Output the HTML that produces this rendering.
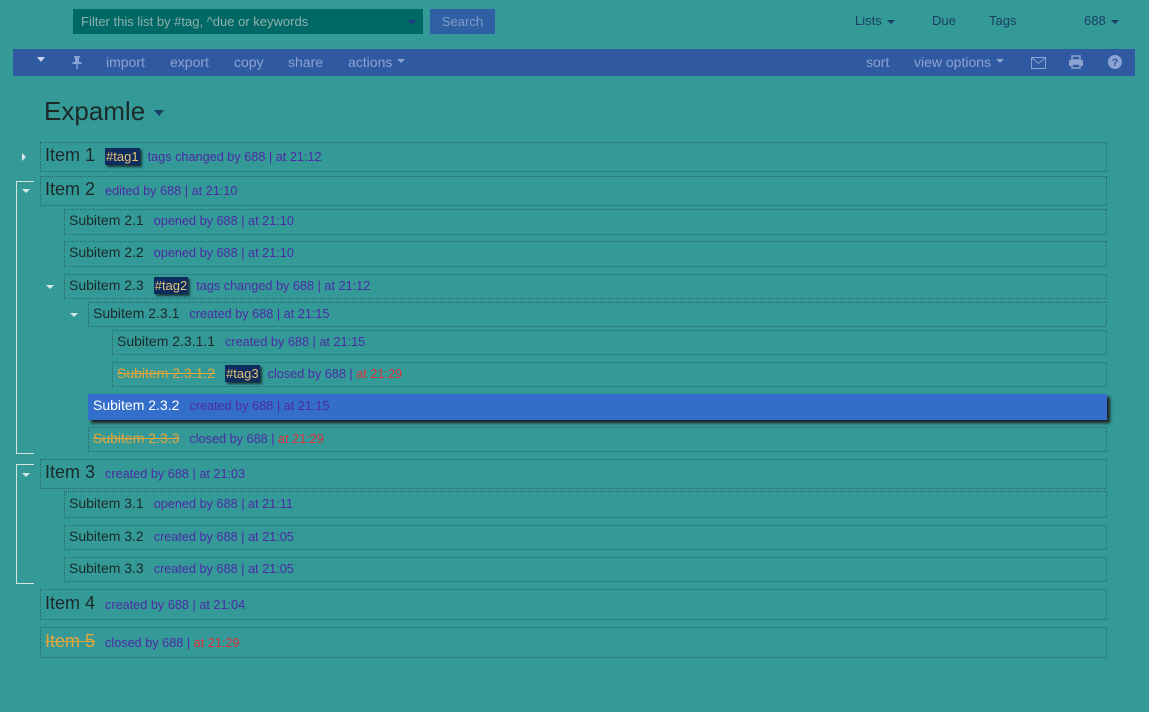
<!DOCTYPE html>
<html><head><meta charset="utf-8"><style>
*{box-sizing:border-box;margin:0;padding:0}
body{width:1149px;height:712px;background:#339a97;font-family:"Liberation Sans",sans-serif;position:relative;overflow:hidden}
.a{position:absolute}
.search{left:73px;top:9px;width:350px;height:25px;background:#006865;color:#8fb0ad;font-size:13px;line-height:25px;padding-left:8px}
.btn{left:430px;top:9px;width:65px;height:25px;background:#3060a4;color:#7f9cc8;font-size:13px;line-height:25px;text-align:center}
.nav{top:13px;color:#1a3e66;font-size:13px}
.bar{left:13px;top:49px;width:1122px;height:27px;background:#2f5aa1}
.bar span{position:absolute;top:5px;color:#8ba3d2;font-size:14px}
.car{display:inline-block;width:0;height:0;border-left:4px solid transparent;border-right:4px solid transparent;border-top:4px solid currentColor;vertical-align:middle;margin-left:5px}
h1{position:absolute;left:44px;top:96px;font-size:26px;font-weight:normal;color:#1c2a2a}
.r{position:absolute;border:1px dotted #2a6664;height:28px;white-space:nowrap;padding-left:4px;font-size:13px}
.r .t{color:#1c2a2a}
.big .t{font-size:18px}
.sub .t{font-size:14px}
.m{color:#4e2aa6;margin-left:10px;font-size:12.7px}
.tag+.m{margin-left:8px}
.red{color:#e0303a}
.done{color:#e6a53a !important;text-decoration:line-through}
.tag{background:#0e2c5e;color:#e5c277;padding:1px 1px;box-shadow:2px 2px 2px #1a3a3a;margin-left:10px;font-size:13px}
.tri{position:absolute;width:0;height:0;border-left:4px solid transparent;border-right:4px solid transparent;border-top:4px solid #d8e8e8}
.trr{position:absolute;width:0;height:0;border-top:4px solid transparent;border-bottom:4px solid transparent;border-left:4px solid #d8e8e8}
.br{position:absolute;border:1px solid #d5e3e3;border-right:none;width:18px}
.sel{background:#336ecb;border:none;box-shadow:3px 3px 3px #1e1e1e}
</style></head><body>
<div class="a search">Filter this list by #tag, ^due or keywords<span class="a" style="right:6px;top:11px;border-left:5px solid transparent;border-right:5px solid transparent;border-top:5px solid #1a4580"></span></div>
<div class="a btn">Search</div>
<div class="a nav" style="left:855px">Lists<span class="car"></span></div>
<div class="a nav" style="left:932px">Due</div>
<div class="a nav" style="left:989px">Tags</div>
<div class="a nav" style="left:1084px">688<span class="car"></span></div>
<div class="a bar">
<span style="left:19px;top:3px"><span class="car" style="border-top-color:#c9d5ee;border-width:5px 4px 0"></span></span>
<span style="left:59px;top:7px"><svg width="10" height="13"><rect x="2" y="0" width="6" height="1.5" fill="#8ba3d2"/><rect x="3" y="1" width="4" height="5" fill="#8ba3d2"/><rect x="0.5" y="6" width="9" height="2" fill="#8ba3d2"/><rect x="4.3" y="8" width="1.4" height="5" fill="#8ba3d2"/></svg></span>
<span style="left:93px">import</span><span style="left:157px">export</span><span style="left:221px">copy</span><span style="left:275px">share</span><span style="left:335px">actions<span class="car"></span></span>
<span style="left:853px">sort</span><span style="left:901px">view options<span class="car"></span></span>
<span style="left:1018px;top:7px"><svg width="15" height="12"><rect x=".5" y=".5" width="14" height="11" fill="none" stroke="#8ba3d2"/><path d="M.5 .5L7.5 6.5L14.5 .5" fill="none" stroke="#8ba3d2"/></svg></span>
<span style="left:1056px;top:6px"><svg width="14" height="14"><rect x="3" y="1" width="8" height="4" fill="none" stroke="#8ba3d2" stroke-width="1.5"/><rect x="0" y="5" width="14" height="6" rx="1" fill="#8ba3d2"/><rect x="3" y="9" width="8" height="4" fill="#2f5aa1" stroke="#8ba3d2" stroke-width="1.5"/></svg></span>
<span style="left:1095px;top:6px"><svg width="14" height="14"><circle cx="7" cy="7" r="7" fill="#8ba3d2"/><text x="7" y="11" font-size="11" font-weight="bold" text-anchor="middle" fill="#2f5aa1" font-family="Liberation Sans">?</text></svg></span>
</div>
<h1>Expamle<span class="car" style="border-width:6px 5px 0;border-top-color:#1a3e66;margin-left:9px"></span></h1>

<div class="trr" style="left:22px;top:153px"></div>
<div class="tri" style="left:22px;top:189px"></div>
<div class="tri" style="left:46px;top:285px"></div>
<div class="tri" style="left:70px;top:313px"></div>
<div class="tri" style="left:22px;top:473px"></div>
<div class="br" style="left:16px;top:181px;height:273px"></div>
<div class="br" style="left:16px;top:464px;height:120px"></div>

<div class="r big" style="left:40px;top:142px;width:1067px;height:30px;line-height:25px"><span class="t">Item 1</span><span class="tag">#tag1</span><span class="m">tags changed by 688 | at 21:12</span></div>
<div class="r big" style="left:40px;top:176px;width:1067px;height:30px;line-height:25px"><span class="t">Item 2</span><span class="m">edited by 688 | at 21:10</span></div>
<div class="r sub" style="left:64px;top:209px;width:1043px;height:26px;line-height:21px"><span class="t">Subitem 2.1</span><span class="m">opened by 688 | at 21:10</span></div>
<div class="r sub" style="left:64px;top:241px;width:1043px;height:26px;line-height:21px"><span class="t">Subitem 2.2</span><span class="m">opened by 688 | at 21:10</span></div>
<div class="r sub" style="left:64px;top:274px;width:1043px;height:25px;line-height:21px"><span class="t">Subitem 2.3</span><span class="tag">#tag2</span><span class="m">tags changed by 688 | at 21:12</span></div>
<div class="r sub" style="left:88px;top:302px;width:1019px;height:25px;line-height:21px"><span class="t">Subitem 2.3.1</span><span class="m">created by 688 | at 21:15</span></div>
<div class="r sub" style="left:112px;top:330px;width:995px;height:25px;line-height:21px"><span class="t">Subitem 2.3.1.1</span><span class="m">created by 688 | at 21:15</span></div>
<div class="r sub" style="left:112px;top:362px;width:995px;height:25px;line-height:21px"><span class="t done">Subitem 2.3.1.2</span><span class="tag">#tag3</span><span class="m">closed by 688 | <span class="red">at 21:29</span></span></div>
<div class="r sub sel" style="left:88px;top:394px;width:1019px;height:26px;line-height:23px;padding-left:5px"><span class="t" style="color:#fff">Subitem 2.3.2</span><span class="m">created by 688 | at 21:15</span></div>
<div class="r sub" style="left:88px;top:427px;width:1019px;height:25px;line-height:21px"><span class="t done">Subitem 2.3.3</span><span class="m">closed by 688 | <span class="red">at 21:29</span></span></div>
<div class="r big" style="left:40px;top:459px;width:1067px;height:30px;line-height:25px"><span class="t">Item 3</span><span class="m">created by 688 | at 21:03</span></div>
<div class="r sub" style="left:64px;top:491px;width:1043px;height:27px;line-height:23px"><span class="t">Subitem 3.1</span><span class="m">opened by 688 | at 21:11</span></div>
<div class="r sub" style="left:64px;top:525px;width:1043px;height:25px;line-height:21px"><span class="t">Subitem 3.2</span><span class="m">created by 688 | at 21:05</span></div>
<div class="r sub" style="left:64px;top:557px;width:1043px;height:25px;line-height:21px"><span class="t">Subitem 3.3</span><span class="m">created by 688 | at 21:05</span></div>
<div class="r big" style="left:40px;top:589px;width:1067px;height:31px;line-height:26px"><span class="t">Item 4</span><span class="m">created by 688 | at 21:04</span></div>
<div class="r big" style="left:40px;top:627px;width:1067px;height:31px;line-height:26px"><span class="t done">Item 5</span><span class="m">closed by 688 | <span class="red">at 21:29</span></span></div>
</body></html>
